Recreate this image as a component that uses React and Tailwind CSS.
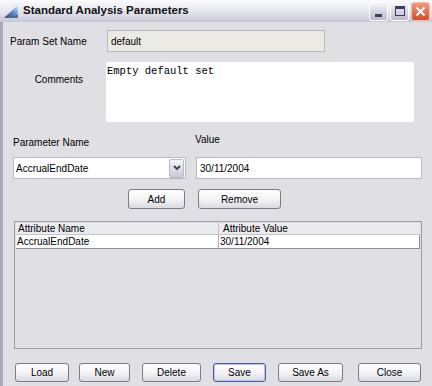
import React from "react";

const ui = { fontFamily: '"Liberation Sans", Arial, sans-serif' };

function XpButton({ children, className = "", focused = false }) {
  return (
    <button
      style={ui}
      className={
        "flex items-center justify-center rounded-[3px] border bg-gradient-to-b from-white via-[#f4f4f7] to-[#d9d9e2] text-[10px] text-black " +
        (focused ? "border-[#49609a] shadow-[inset_0_0_0_1px_#b4c6ec] " : "border-[#7b7b8c] ") +
        className
      }
    >
      {children}
    </button>
  );
}

function CaptionButton({ children, close = false }) {
  return (
    <div
      className={
        "flex h-[19px] w-[19px] items-center justify-center rounded-[3px] border " +
        (close
          ? "border-[#f0c0b0] bg-gradient-to-b from-[#f09a80] to-[#d44a26]"
          : "border-white bg-gradient-to-b from-[#f6f6fa] to-[#b9b9cc]")
      }
    >
      {children}
    </div>
  );
}

function TitleBar() {
  return (
    <div className="flex h-[22px] shrink-0 items-center bg-gradient-to-b from-[#fbfbfd] via-[#e6e6ee] to-[#c8c8d6] pl-[3px] pr-[2px]">
      <svg width="16" height="16" viewBox="0 0 16 16" className="mr-[4px]">
        <defs>
          <linearGradient id="ic" x1="0" y1="1" x2="1" y2="0">
            <stop offset="0" stopColor="#27407a" />
            <stop offset="0.55" stopColor="#5f8fcf" />
            <stop offset="1" stopColor="#e6eef8" />
          </linearGradient>
        </defs>
        <path d="M1 15 L15 2 L15 15 Z" fill="url(#ic)" />
        <path d="M1 15 L15 12 L15 15 Z" fill="#5b6a86" />
      </svg>
      <span className="flex-1 text-[11.5px] font-bold text-[#111]">
        Standard Analysis Parameters
      </span>
      <div className="flex gap-[2px]">
        <CaptionButton>
          <div className="mt-[8px] h-[3px] w-[7px] bg-[#3c3c5c]" />
        </CaptionButton>
        <CaptionButton>
          <div className="h-[10px] w-[10px] border border-t-[3px] border-[#3c3c5c]" />
        </CaptionButton>
        <CaptionButton close>
          <svg width="11" height="11" viewBox="0 0 11 11">
            <path d="M1.5 1.5 L9.5 9.5 M9.5 1.5 L1.5 9.5" stroke="white" strokeWidth="2" />
          </svg>
        </CaptionButton>
      </div>
    </div>
  );
}

export default function App() {
  return (
    <div className="h-[386px] w-[432px] overflow-hidden bg-[#e0dfe3]" style={ui}>
      <TitleBar />
      <div className="flex h-[364px] flex-col border-l-[3px] border-[#a9a9bb] text-[10px] text-black">

        {/* Param set name */}
        <div className="mt-[8px] flex h-[22px] items-center">
          <span className="ml-[7px] w-[97px]">Param Set Name</span>
          <div className="flex h-[22px] w-[218px] items-center border border-[#b9b9b9] bg-[#ebebe4] pl-[3px]">
            default
          </div>
        </div>

        {/* Comments */}
        <div className="mt-[10px] flex">
          <span className="mt-[10px] w-[80px] text-right">Comments</span>
          <div
            className="ml-[23px] h-[60px] w-[308px] bg-white pl-[1px] pt-[2px] text-[10.5px]"
            style={{ fontFamily: '"Liberation Mono", "Courier New", monospace' }}
          >
            Empty default set
          </div>
        </div>

        {/* Parameter labels */}
        <div className="mt-[13px] flex h-[12px] items-end">
          <span className="ml-[10px] w-[182px] translate-y-[3px]">Parameter Name</span>
          <span>Value</span>
        </div>

        {/* Parameter inputs */}
        <div className="mt-[10px] flex h-[22px]">
          <div className="ml-[10px] flex w-[173px] items-center border border-[#b9b9c4] bg-white">
            <span className="flex-1 pl-[2px]">AccrualEndDate</span>
            <div className="m-[1px] flex h-[19px] w-[15px] items-center justify-center rounded-[2px] border border-[#b9b9cb] bg-gradient-to-b from-[#f4f4f8] to-[#c9c9d8]">
              <svg width="8" height="6" viewBox="0 0 8 6">
                <path d="M1 1 L4 4 L7 1" stroke="#3c3c50" strokeWidth="1.8" fill="none" />
              </svg>
            </div>
          </div>
          <div className="ml-[10px] flex w-[226px] items-center border border-[#b9b9c4] bg-white pl-[3px]">
            30/11/2004
          </div>
        </div>

        {/* Add / Remove */}
        <div className="mt-[10px] flex h-[20px]">
          <XpButton className="ml-[125px] w-[57px]">Add</XpButton>
          <XpButton className="ml-[13px] w-[83px]">Remove</XpButton>
        </div>

        {/* Table */}
        <div className="ml-[11px] mt-[12px] flex h-[128px] w-[408px] flex-col border border-[#9c9cab] bg-[#e0dfe3] p-[1px]">
          <div className="flex h-[12px] border-b border-[#c4c4cc] bg-[#ebeaee] text-[10px] leading-[12px]">
            <span className="w-[203px] border-r border-[#c0c0c8] pl-[2px]">Attribute Name</span>
            <span className="pl-[4px]">Attribute Value</span>
          </div>
          <div className="flex h-[14px] w-[404px] border-b border-r border-[#8e8e9a] bg-white leading-[13px]">
            <span className="w-[203px] border-r border-[#b4b4bc] pl-[1px]">AccrualEndDate</span>
            <span className="pl-[1px]">30/11/2004</span>
          </div>
        </div>

        {/* Bottom buttons */}
        <div className="mt-[14px] flex h-[19px]">
          <XpButton className="ml-[12px] w-[54px]">Load</XpButton>
          <XpButton className="ml-[10px] w-[51px]">New</XpButton>
          <XpButton className="ml-[12px] w-[59px]">Delete</XpButton>
          <XpButton focused className="ml-[12px] w-[53px]">Save</XpButton>
          <XpButton className="ml-[12px] w-[65px]">Save As</XpButton>
          <XpButton className="ml-[15px] w-[63px]">Close</XpButton>
        </div>
      </div>
    </div>
  );
}
